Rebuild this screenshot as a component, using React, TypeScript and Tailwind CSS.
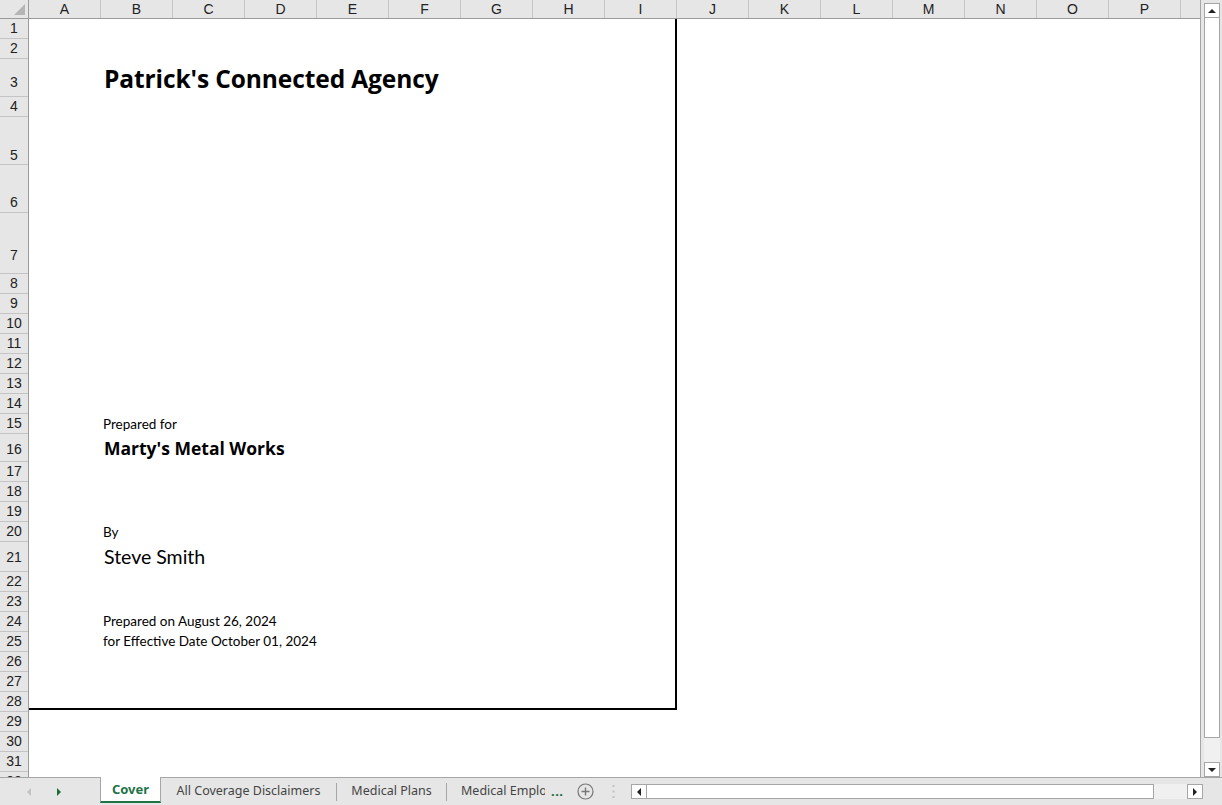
import React from 'react';

const COLS = ['A', 'B', 'C', 'D', 'E', 'F', 'G', 'H', 'I', 'J', 'K', 'L', 'M', 'N', 'O', 'P'];

// [row height incl. bottom line, label bottom padding]
const ROWS: [number, number][] = [
  [20, 1], [20, 1], [38, 5], [20, 1], [48, 0], [48, 1], [61, 9],
  [20, 1], [20, 1], [20, 1], [20, 1], [20, 1], [20, 1], [20, 1], [20, 1],
  [28, 3], [20, 1], [20, 1], [20, 1], [20, 1], [30, 5],
  [20, 1], [20, 1], [20, 1], [20, 1], [20, 1], [20, 1], [20, 1], [20, 1], [20, 1], [20, 1], [20, 1],
];

const calibri = { fontFamily: 'Lato, "Open Sans", sans-serif' };
const openSans = { fontFamily: '"Open Sans", Lato, sans-serif' };

function RowHeader() {
  return (
    <div className="w-[29px] shrink-0 flex flex-col bg-[#e6e6e6] border-r border-[#9b9b9b]">
      {ROWS.map(([h, pb], i) => (
        <div
          key={i}
          style={{ height: h, paddingBottom: pb }}
          className="shrink-0 flex items-end justify-center border-b border-[#c4c4c4] text-[14px] leading-[17px] text-[#222]"
        >
          {i + 1}
        </div>
      ))}
    </div>
  );
}

function ColumnHeader() {
  return (
    <div className="h-[19px] shrink-0 flex bg-[#e6e6e6] border-b border-[#9b9b9b] text-[14px] leading-[18px] text-[#222]">
      <div className="w-[29px] shrink-0 border-r border-[#9b9b9b] relative">
        <svg className="absolute right-[3px] bottom-[3px]" width="11" height="11" viewBox="0 0 11 11">
          <polygon points="11,0 11,11 0,11" fill="#b5b5b5" />
        </svg>
      </div>
      {COLS.map((c) => (
        <div key={c} className="w-[72px] shrink-0 border-r border-[#c4c4c4] text-center">
          {c}
        </div>
      ))}
      <div className="flex-1" />
    </div>
  );
}

function Line({ h, children, pb = 2 }: { h: number; children?: React.ReactNode; pb?: number }) {
  return (
    <div style={{ height: h, paddingBottom: pb }} className="shrink-0 flex items-end pl-[75px] whitespace-nowrap text-black">
      {children}
    </div>
  );
}

function Sheet() {
  return (
    <div className="flex-1 flex flex-col bg-white overflow-hidden" style={calibri}>
      <div className="w-[648px] border-r-2 border-b-2 border-black flex flex-col">
        <Line h={20} />
        <Line h={20} />
        <Line h={38} pb={3}>
          <span className="text-[24.5px] font-bold leading-[30px] tracking-[-0.1px]" style={openSans}>
            Patrick's Connected Agency
          </span>
        </Line>
        <Line h={20} />
        <Line h={48} />
        <Line h={48} />
        <Line h={61} />
        {[0, 1, 2, 3, 4, 5, 6].map((i) => (
          <Line key={i} h={20} />
        ))}
        <Line h={20} pb={1}>
          <span className="text-[13.5px] leading-[18px] -ml-px">Prepared for</span>
        </Line>
        <Line h={28} pb={2}>
          <span className="text-[17.5px] font-bold leading-[24px]" style={openSans}>
            Marty's Metal Works
          </span>
        </Line>
        <Line h={20} />
        <Line h={20} />
        <Line h={20} />
        <Line h={20} pb={1}>
          <span className="text-[13.5px] leading-[18px] -ml-px">By</span>
        </Line>
        <Line h={30} pb={3}>
          <span className="text-[19.5px] leading-[24px]">Steve Smith</span>
        </Line>
        <Line h={20} />
        <Line h={20} />
        <Line h={20} pb={2}>
          <span className="text-[13.5px] leading-[18px] -ml-px">Prepared on August 26, 2024</span>
        </Line>
        <Line h={20} pb={2}>
          <span className="text-[13.5px] leading-[18px] -ml-px">for Effective Date October 01, 2024</span>
        </Line>
        <Line h={20} />
        <Line h={20} />
        <Line h={16} />
      </div>
    </div>
  );
}

function ArrowBox({ dir }: { dir: 'up' | 'down' | 'left' | 'right' }) {
  const pts: Record<string, string> = {
    up: '0,4 4,0 8,4',
    down: '0,0 8,0 4,4',
    left: '4,0 4,8 0,4',
    right: '0,0 4,4 0,8',
  };
  const vertical = dir === 'up' || dir === 'down';
  return (
    <div className="w-[16px] h-[15px] shrink-0 bg-white border border-[#a6a6a6] flex items-center justify-center">
      <svg width={vertical ? 8 : 4} height={vertical ? 4 : 8} viewBox={vertical ? '0 0 8 4' : '0 0 4 8'}>
        <polygon points={pts[dir]} fill="#222" />
      </svg>
    </div>
  );
}

function VScroll() {
  return (
    <div className="w-[22px] shrink-0 bg-[#e6e6e6] border-l border-[#a6a6a6] flex flex-col pl-[3px] pr-[2px] pt-[3px]">
      <ArrowBox dir="up" />
      <div className="h-[720px] shrink-0 bg-white border border-[#a6a6a6] border-t-0" />
      <div className="flex-1 bg-[#f0f0f0]" />
      <ArrowBox dir="down" />
    </div>
  );
}

function TabBar() {
  const tab = 'text-[12.5px] text-[#444] whitespace-nowrap';
  return (
    <div
      className="h-[28px] shrink-0 flex items-start bg-[#e6e6e6] border-t border-[#a6a6a6]"
      style={{ fontFamily: '"Noto Sans", "Open Sans", sans-serif' }}
    >
      <div className="w-[100px] h-full flex items-center">
        <svg className="ml-[27px]" width="4" height="8" viewBox="0 0 4 8">
          <polygon points="4,0 4,8 0,4" fill="#c2c2c2" />
        </svg>
        <svg className="ml-[26px]" width="4" height="8" viewBox="0 0 4 8">
          <polygon points="0,0 4,4 0,8" fill="#1e6b3e" />
        </svg>
      </div>
      <div className="-mt-px w-[61px] h-[26px] bg-white border-x border-[#a6a6a6] border-b-2 border-b-[#217346] flex items-center justify-center pt-[1px]">
        <span className="text-[13px] font-bold text-[#217346]">Cover</span>
      </div>
      <div className="h-full flex items-center">
        <div className="w-[175px] flex justify-center">
          <span className={tab}>All Coverage Disclaimers</span>
        </div>
        <div className="w-px h-[18px] bg-[#a6a6a6]" />
        <div className="w-[109px] flex justify-center">
          <span className={tab}>Medical Plans</span>
        </div>
        <div className="w-px h-[18px] bg-[#a6a6a6]" />
        <div className="ml-[14px] w-[84px] h-full flex items-center overflow-hidden">
          <span className={tab}>Medical Employee</span>
        </div>
        <span className="text-[13px] font-bold text-[#1e6b3e] ml-[6px] tracking-[0.5px]">...</span>
        <svg className="ml-[14px]" width="17" height="17" viewBox="0 0 17 17">
          <circle cx="8.5" cy="8.5" r="7.5" fill="none" stroke="#777" strokeWidth="1.2" />
          <path d="M8.5 4.5v8M4.5 8.5h8" stroke="#777" strokeWidth="1.4" />
        </svg>
        <svg className="ml-[18px]" width="3" height="13" viewBox="0 0 3 13">
          <rect x="0.5" y="0" width="2" height="2" fill="#c2c2c2" />
          <rect x="0.5" y="5.5" width="2" height="2" fill="#c2c2c2" />
          <rect x="0.5" y="11" width="2" height="2" fill="#c2c2c2" />
        </svg>
        <div className="ml-[16px] flex items-center">
          <ArrowBox dir="left" />
          <div className="w-[507px] h-[15px] bg-white border border-l-0 border-[#a6a6a6]" />
          <div className="w-[33px] h-[15px] bg-[#f0f0f0]" />
          <ArrowBox dir="right" />
        </div>
      </div>
    </div>
  );
}

export default function App() {
  return (
    <div className="w-[1222px] h-[805px] flex flex-col overflow-hidden bg-white select-none" style={{ fontFamily: '"Liberation Sans", Arial, sans-serif' }}>
      <div className="h-[777px] shrink-0 flex">
        <div className="flex-1 flex flex-col overflow-hidden">
          <ColumnHeader />
          <div className="flex-1 flex overflow-hidden">
            <RowHeader />
            <Sheet />
          </div>
        </div>
        <VScroll />
      </div>
      <TabBar />
    </div>
  );
}
